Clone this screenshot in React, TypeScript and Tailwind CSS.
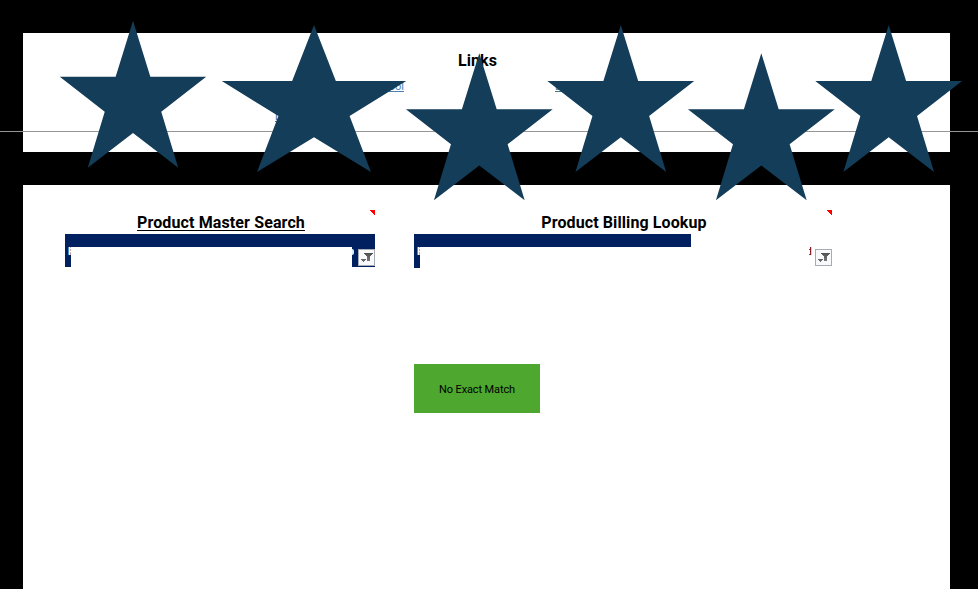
import React from "react";

type StarSpec = { cx: number; top: number; half: number };

const STARS: StarSpec[] = [
  { cx: 133, top: 20.7, half: 73.2 },
  { cx: 314, top: 25, half: 92.2 },
  { cx: 479.3, top: 53.2, half: 73.4 },
  { cx: 620.8, top: 25, half: 73.4 },
  { cx: 761.3, top: 53.2, half: 73.4 },
  { cx: 888.7, top: 25, half: 73.4 },
];

// Outline of a five-pointed star: x as a share of the half width, y in pixels.
const OUTLINE: [number, number][] = [
  [0, 0], [0.237, 56], [1, 56], [0.386, 91], [0.618, 147],
  [0, 112.3], [-0.618, 147], [-0.386, 91], [-1, 56], [-0.237, 56],
];

function Stars() {
  return (
    <svg className="pointer-events-none absolute inset-0" width="978" height="589" viewBox="0 0 978 589">
      {STARS.map((s) => (
        <polygon
          key={s.cx}
          fill="#133d59"
          points={OUTLINE.map(([x, y]) => `${s.cx + x * s.half},${s.top + y}`).join(" ")}
        />
      ))}
    </svg>
  );
}

function FilterButton() {
  return (
    <svg width="17" height="17" viewBox="0 0 17 17" className="block shrink-0" shapeRendering="crispEdges">
      <defs>
        <linearGradient id="funnel" x1="0" y1="0" x2="0" y2="1">
          <stop offset="0" stopColor="#505050" />
          <stop offset="1" stopColor="#777777" />
        </linearGradient>
      </defs>
      <rect x="0.5" y="0.5" width="16" height="16" fill="#f8f9fb" stroke="#a7abb3" />
      <path d="M6 4h9v1h-1v1h-1v1h-1v5H9V7H8V6H7V5H6z" fill="url(#funnel)" />
      <path d="M3 10h5v1H7v1H6v1H5v-1H4v-1H3z" fill="#686868" />
    </svg>
  );
}

function NoteMark() {
  return (
    <svg width="5" height="5" viewBox="0 0 5 5" className="block" shapeRendering="crispEdges">
      <path d="M0 0h5v5H4V4H3V3H2V2H1V1H0z" fill="#ff0000" />
    </svg>
  );
}

// Visible edge of the covered column caption.
function CaptionEdge() {
  return (
    <svg width="3" height="8" viewBox="0 0 3 8" className="block" shapeRendering="crispEdges">
      <path d="M0 0h1v8H0z" fill="#3f8fc8" />
      <path d="M1 0h1v8H1z" fill="#ffffff" />
      <path d="M2 0h1v1H2zM2 2h1v2H2zM2 5h1v3H2z" fill="#d9a79c" />
      <path d="M2 1h1v1H2zM2 4h1v1H2z" fill="#ffffff" />
    </svg>
  );
}

function CaptionTail() {
  return (
    <svg width="3" height="8" viewBox="0 0 3 8" className="block" shapeRendering="crispEdges">
      <path d="M1 0h1v8H1z" fill="#8c1d24" />
      <path d="M0 2h1v1H0zM0 7h1v1H0z" fill="#5a5a5a" />
      <path d="M2 0h1v8H2z" fill="#b9dcf3" />
    </svg>
  );
}

function LinksPanel() {
  return (
    <section className="flex h-[119px] flex-col bg-white pt-[16px]">
      <h2 className="pr-[18px] text-center text-base leading-[23px] font-bold tracking-[0.1px]">
        Links
      </h2>
      <div className="mt-[7px] flex h-4 text-[11px] leading-4 text-[#467886] underline underline-offset-1">
        <a className="ml-[361px] w-[20px] text-right text-[#4a7fb0]">ool</a>
        <a className="ml-[151px]">Link</a>
      </div>
      <div className="mt-[14px] flex h-4 text-[11px] leading-4 text-[#4a6fa0] underline underline-offset-1">
        <a className="ml-[252px]">Link</a>
      </div>
    </section>
  );
}

function MasterSearch() {
  return (
    <div className="w-[310px]">
      <div className="flex h-[24px] justify-end">
        <NoteMark />
      </div>
      <div className="-mt-[23px] h-[23px] pl-[2px] text-center text-base leading-[23px] font-bold tracking-[0.12px]">
        <span className="underline decoration-1 underline-offset-2">Product Master Search</span>
      </div>
      <div className="h-[13px] bg-[#00205f]" />
      <div className="flex h-5 justify-between">
        <div className="w-[6px] bg-[#00205f] pl-[3px]">
          <CaptionEdge />
        </div>
        <div className="flex w-[23px] justify-between bg-[#00205f]">
          <span className="mt-[2px] h-[6px] w-[2px] rounded-r-full bg-[#d9eefa]" />
          <div className="pt-[2px]">
            <FilterButton />
          </div>
        </div>
      </div>
    </div>
  );
}

function BillingLookup() {
  return (
    <div className="w-[418px]">
      <div className="flex h-[24px] justify-end">
        <NoteMark />
      </div>
      <div className="-mt-[23px] h-[23px] pl-[2px] text-center text-base leading-[23px] font-bold tracking-[0.1px]">
        Product Billing Lookup
      </div>
      <div className="h-[13px] w-[277px] bg-[#00205f]" />
      <div className="flex h-[21px] justify-between">
        <div className="w-[6px] bg-[#00205f] pl-[3px]">
          <CaptionEdge />
        </div>
        <div className="flex gap-[3px]">
          <CaptionTail />
          <div className="pt-[2px]">
            <FilterButton />
          </div>
        </div>
      </div>
      <div className="mt-[96px] flex h-[49px] w-[126px] items-center justify-center bg-[#4ea72e] pt-[3px] text-[11px] tracking-[-0.12px] text-black">
        No Exact Match
      </div>
    </div>
  );
}

export default function App() {
  return (
    <main className="relative flex h-[589px] w-[978px] flex-col overflow-hidden bg-black pt-[33px] pr-[28px] pl-[23px] font-[Roboto,sans-serif] text-black">
      <LinksPanel />
      <section className="mt-[33px] flex flex-1 items-start gap-[39px] bg-white pt-[25px] pl-[42px]">
        <MasterSearch />
        <BillingLookup />
      </section>
      <div className="absolute top-[131px] left-0 h-px w-full bg-[#969696]" />
      <Stars />
    </main>
  );
}
